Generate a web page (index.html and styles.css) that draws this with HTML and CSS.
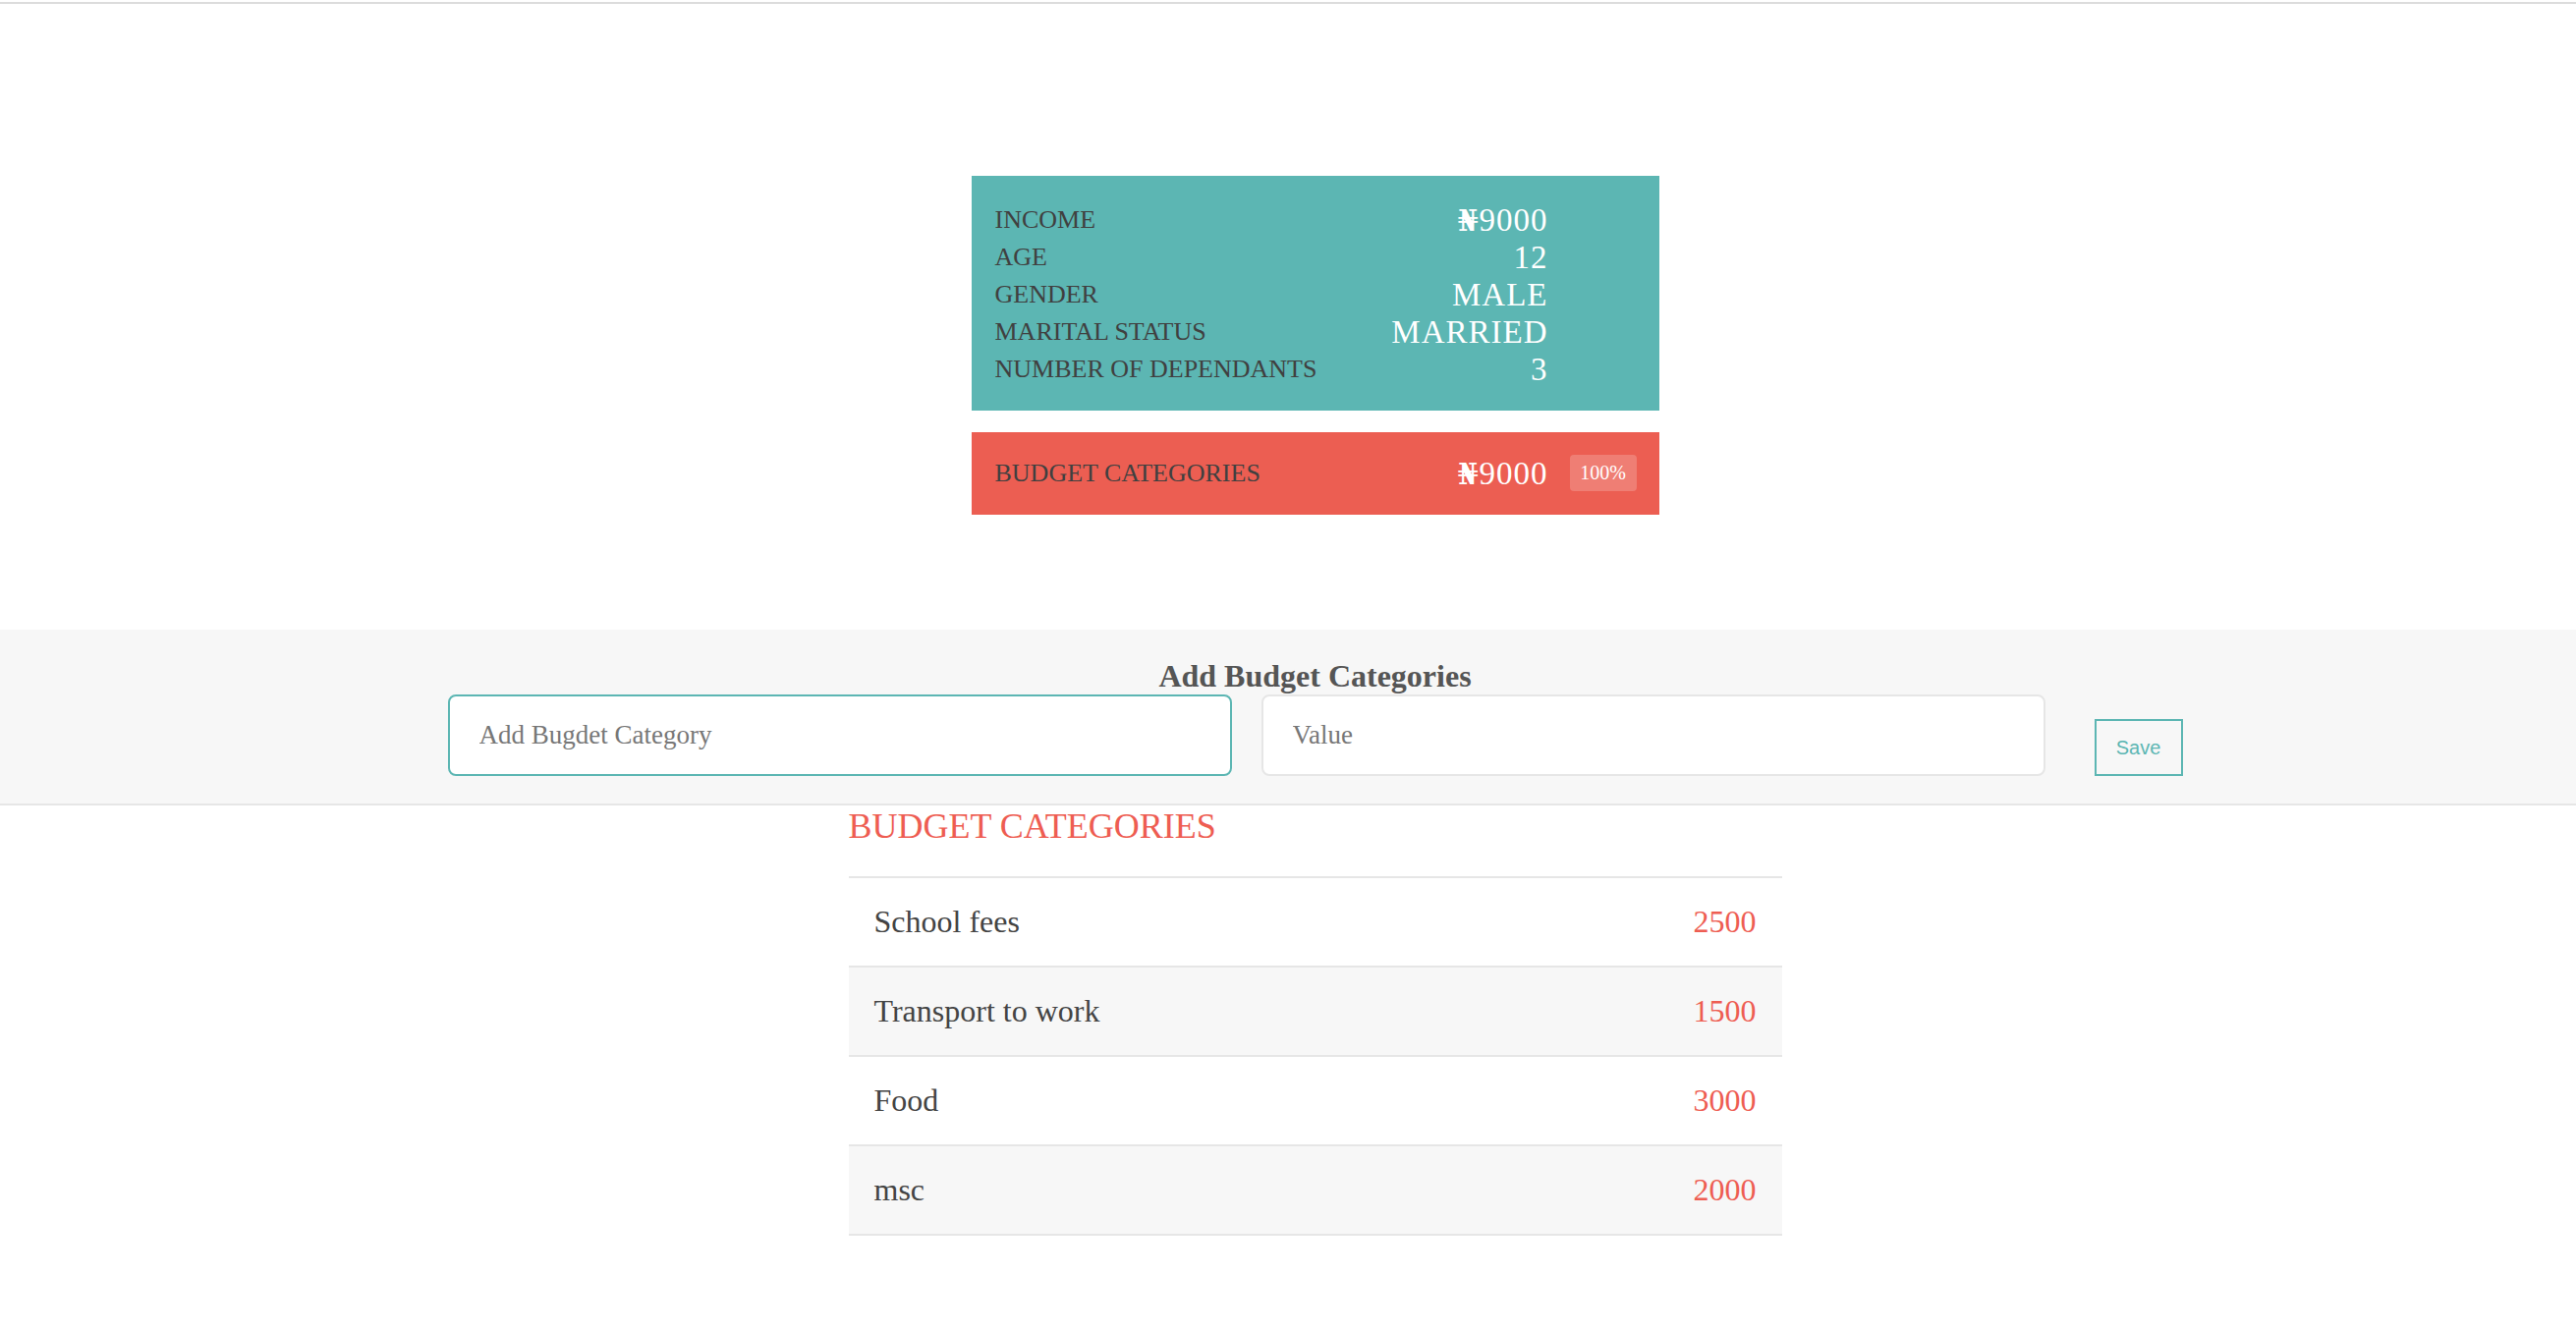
FILE: index.html
```html
<!DOCTYPE html>
<html lang="en">
<head>
<meta charset="utf-8">
<title>Budget</title>
<link rel="stylesheet" href="styles.css">
</head>
<body>
<div class="topline"></div>
<main class="summary">
  <div class="card card-teal">
    <div class="row"><span class="label">INCOME</span><span class="value"><span class="naira">₦</span>9000</span><span></span></div>
    <div class="row"><span class="label">AGE</span><span class="value">12</span><span></span></div>
    <div class="row"><span class="label">GENDER</span><span class="value">MALE</span><span></span></div>
    <div class="row"><span class="label">MARITAL STATUS</span><span class="value">MARRIED</span><span></span></div>
    <div class="row"><span class="label">NUMBER OF DEPENDANTS</span><span class="value">3</span><span></span></div>
  </div>
  <div class="card card-red">
    <div class="row"><span class="label">BUDGET CATEGORIES</span><span class="value"><span class="naira">₦</span>9000</span><span class="badge">100%</span></div>
  </div>
</main>
<section class="add">
  <div class="add-inner">
    <h2 class="add-title">Add Budget Categories</h2>
    <form class="add-form">
      <input class="field field-active" type="text" placeholder="Add Bugdet Category">
      <input class="field" type="text" placeholder="Value">
      <button class="save" type="button">Save</button>
    </form>
  </div>
</section>
<section class="list">
  <div class="list-inner">
    <h3 class="list-title">BUDGET CATEGORIES</h3>
    <ul class="items">
      <li class="item"><span class="item-name">School fees</span><span class="item-value">2500</span></li>
      <li class="item item-alt"><span class="item-name">Transport to work</span><span class="item-value">1500</span></li>
      <li class="item"><span class="item-name">Food</span><span class="item-value">3000</span></li>
      <li class="item item-alt"><span class="item-name">msc</span><span class="item-value">2000</span></li>
    </ul>
  </div>
</section>
</body>
</html>
```

FILE: styles.css
```css
* { box-sizing: border-box; }

html, body {
  margin: 0;
  padding: 0;
  background: #ffffff;
  font-family: "Liberation Serif", "DejaVu Serif", serif;
  color: #444444;
}

.topline {
  margin-top: 2px;
  height: 2px;
  background: #dcdcdc;
}

.summary {
  padding: 175px 0 117px 55px;
}

.card {
  width: 700px;
  margin: 0 auto;
  padding: 23px 23px 23px 24px;
}

.card-teal {
  background: #5cb6b3;
  padding-top: 26px;
}

.card-red {
  background: #ec5e52;
  margin-top: 22px;
}

.row {
  display: grid;
  grid-template-columns: 1fr auto 68px;
  column-gap: 23px;
  line-height: 38px;
  height: 38px;
}

.label {
  font-size: 26px;
  color: #404040;
}

.value {
  font-size: 33px;
  color: #ffffff;
  text-align: right;
  letter-spacing: 1px;
  margin-right: -1px;
}

.naira {
  font-family: "DejaVu Serif", "Liberation Serif", serif;
  font-weight: bold;
  font-size: 30px;
  line-height: 1;
  letter-spacing: 0;
  margin-right: 1px;
}

.badge {
  display: block;
  height: 37px;
  line-height: 37px;
  font-size: 20px;
  color: #ffffff;
  text-align: center;
  border-radius: 4px;
  background: rgba(255, 255, 255, 0.2);
}

.add {
  background: #f7f7f7;
  border-bottom: 2px solid #e6e6e6;
  padding: 29px 0 28px 55px;
}

.add-inner {
  width: 1766px;
  margin: 0 auto;
}

.add-title {
  margin: 0;
  text-align: center;
  font-size: 32px;
  font-weight: bold;
  line-height: normal;
  color: #555555;
}

.add-form {
  display: flex;
  align-items: flex-end;
  gap: 30px;
  margin: 0;
}

.field {
  width: 798px;
  height: 83px;
  padding: 0 30px;
  border: 2px solid #e6e6e6;
  border-radius: 8px;
  background: #ffffff;
  font-family: "Liberation Serif", "DejaVu Serif", serif;
  font-size: 27px;
  color: #444444;
  outline: none;
}

.field::placeholder {
  color: #777777;
}

.field-active {
  border-color: #5cb6b3;
}

.save {
  margin-left: 20px;
  height: 58px;
  width: 90px;
  padding: 0;
  border: 2px solid #5cb6b3;
  background: transparent;
  color: #5cb6b3;
  font-family: "Liberation Sans", Arial, sans-serif;
  font-size: 20px;
  cursor: pointer;
}

.list {
  padding: 0 0 40px 55px;
}

.list-inner {
  width: 950px;
  margin: 0 auto;
}

.list-title {
  margin: 0 0 30px;
  font-size: 36px;
  font-weight: normal;
  line-height: normal;
  color: #ee5d52;
}

.items {
  list-style: none;
  margin: 0;
  padding: 0;
  border-top: 2px solid #e6e6e6;
}

.item {
  display: flex;
  justify-content: space-between;
  padding: 26px 26px;
  border-bottom: 2px solid #e6e6e6;
  font-size: 32px;
  line-height: 37px;
  background: #ffffff;
}

.item-alt {
  background: #f7f7f7;
}

.item-name {
  color: #444444;
}

.item-value {
  color: #ee5d52;
}
```
